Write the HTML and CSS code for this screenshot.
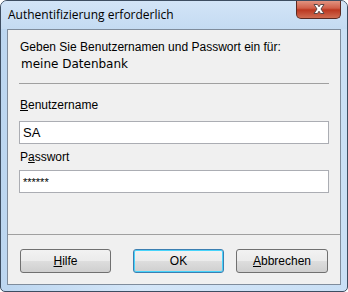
FILE: index.html
```html
<!DOCTYPE html>
<html>
<head>
    <title>Authentifizierung erforderlich</title>
    <link rel="stylesheet" href="styles.css">
</head>
<body>
    <div class="window">
        <div class="titlebar">
            <span class="title">Authentifizierung erforderlich</span>
            <div class="close-btn">
                <svg width="20" height="12" viewBox="0 0 20 12">
                    <path d="M5 1.5 L8.5 1.5 L10 3.8 L11.5 1.5 L15 1.5 L12 6 L15 10.5 L11.5 10.5 L10 8.2 L8.5 10.5 L5 10.5 L8 6 Z"
                          fill="#ffffff" stroke="#5a4646" stroke-width="1" stroke-linejoin="round"/>
                </svg>
            </div>
        </div>
        <div class="client">
            <div class="form-area">
                <div class="prompt">Geben Sie Benutzernamen und Passwort ein für:</div>
                <div class="dbname">meine Datenbank</div>
                <div class="separator"></div>
                <label class="field-label user-label"><u>B</u>enutzername</label>
                <div class="textbox">SA</div>
                <label class="field-label pass-label">P<u>a</u>sswort</label>
                <div class="textbox password">******</div>
            </div>
            <div class="button-row">
                <button class="btn"><u>H</u>ilfe</button>
                <button class="btn default">OK</button>
                <button class="btn wide"><u>A</u>bbrechen</button>
            </div>
        </div>
    </div>
</body>
</html>
```

FILE: styles.css
```css
body {
    margin: 0;
    background: #ffffff;
    font-family: "Liberation Sans", Arial, sans-serif;
    font-size: 12px;
    color: #000;
}
.window {
    width: 348px;
    height: 292px;
    box-sizing: border-box;
    border: 1px solid #3d4d61;
    border-radius: 7px 7px 5px 5px;
    background: linear-gradient(90deg, #bcd6f0 0%, #d4e6f8 40%, #c9dff5 100%);
    display: flex;
    flex-direction: column;
    overflow: hidden;
}
.titlebar {
    height: 28px;
    position: relative;
    display: flex;
    align-items: center;
    padding-left: 7px;
    background: linear-gradient(180deg, #d2e4f7 0%, #c4dbf2 100%);
}
.title {
    font-family: "Open Sans", sans-serif;
    font-size: 12px;
    color: #000;
    margin-top: -2px;
}
.close-btn {
    position: absolute;
    top: -1px;
    right: 6px;
    width: 45px;
    height: 19px;
    box-sizing: border-box;
    border: 1px solid #5b2a22;
    border-top: none;
    border-radius: 0 0 5px 5px;
    background: linear-gradient(180deg, #e49a88 0%, #d0604a 45%, #bb3720 55%, #cf6c52 100%);
    display: flex;
    align-items: center;
    justify-content: center;
}
.client {
    flex: 1;
    margin: 0 6px 6px;
    border: 1px solid #7f8c9c;
    background: #f0f0f0;
    display: flex;
    flex-direction: column;
}
.form-area {
    flex: 1;
    padding: 10px 11px 0;
    display: flex;
    flex-direction: column;
}
.prompt {
    padding-left: 1px;
    line-height: 15px;
}
.dbname {
    font-family: "DejaVu Sans", Verdana, sans-serif;
    font-size: 12px;
    line-height: 15px;
    margin-top: 2px;
    padding-left: 2px;
}
.separator {
    height: 1px;
    background: #a0a0a0;
    margin: 11px 0 14px;
}
.field-label {
    padding-left: 1px;
    line-height: 15px;
}
.user-label {
    margin-bottom: 8px;
}
.pass-label {
    margin-bottom: 5px;
}
.textbox {
    height: 23px;
    box-sizing: border-box;
    border: 1px solid #abadb3;
    background: #ffffff;
    margin-bottom: 6px;
    padding-left: 3px;
    display: flex;
    align-items: center;
    font-size: 13px;
}
.password {
    font-size: 11px;
}
.button-row {
    height: 50px;
    box-sizing: border-box;
    border-top: 1px solid #a0a0a0;
    display: flex;
    align-items: flex-start;
    padding: 14px 0 0 12px;
}
.btn {
    width: 91px;
    height: 24px;
    border: 1px solid #707070;
    border-radius: 3px;
    background: linear-gradient(180deg, #f2f2f2 0%, #ebebeb 48%, #dddddd 52%, #cfcfcf 100%);
    font-family: "Liberation Sans", Arial, sans-serif;
    font-size: 12px;
    color: #000;
    padding: 0;
}
.btn.default {
    margin: 0 12px 0 22px;
    border-color: #3c7fb1;
    box-shadow: inset 0 0 0 1px #48d4fb;
}
.btn.wide {
    width: 92px;
}
```
